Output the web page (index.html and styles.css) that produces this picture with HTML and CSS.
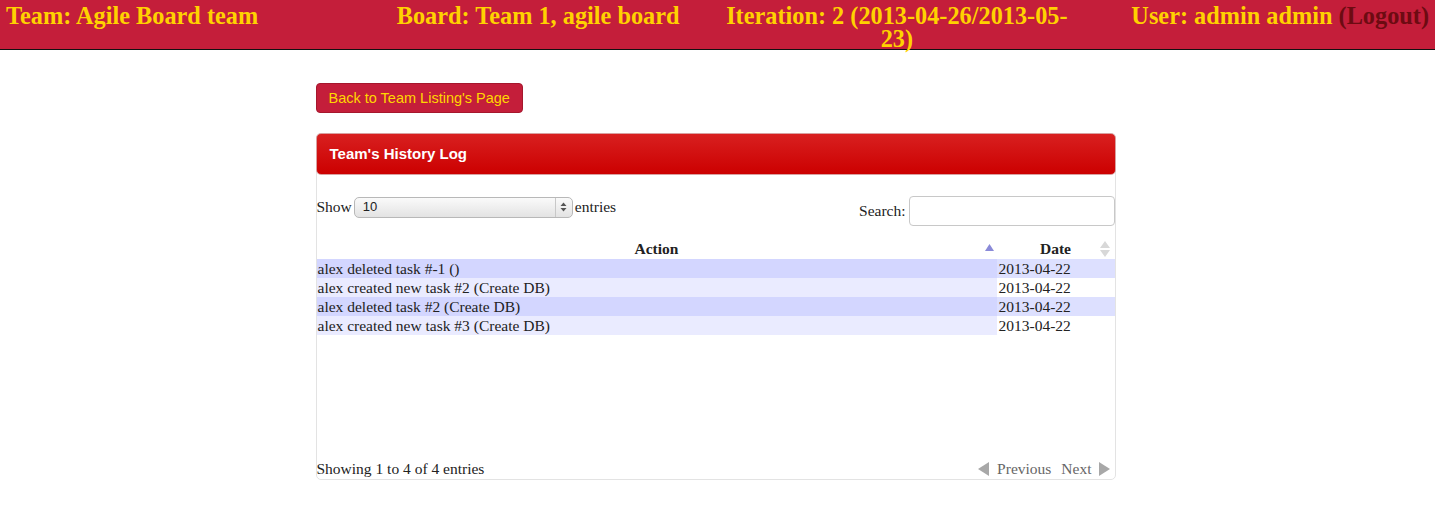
FILE: index.html
```html
<!DOCTYPE html>
<html>
<head>
<meta charset="utf-8">
<link rel="stylesheet" href="styles.css">
</head>
<body>
<div class="topbar">
  <div class="tb-cell tb-left">Team: Agile Board team</div>
  <div class="tb-cell tb-center">Board: Team 1, agile board</div>
  <div class="tb-cell tb-center">Iteration: 2 (2013-04-26/2013-05-23)</div>
  <div class="tb-cell tb-right">User: admin admin <span class="logout">(Logout)</span></div>
</div>
<div class="main">
  <div class="btn">Back to Team Listing's Page</div>
  <div class="panel">
    <div class="panel-head">Team's History Log</div>
    <div class="panel-body">
      <div class="controls">
        <div class="length">Show <span class="select"><span class="sel-val">10</span><span class="sel-arrows"><svg width="7" height="10" viewBox="0 0 7 10"><path d="M3.5 0.5 L6.5 4 L0.5 4 Z M0.5 6 L6.5 6 L3.5 9.5 Z" fill="#555"/></svg></span></span> entries</div>
        <div class="search">Search: <span class="search-input"></span></div>
      </div>
      <div class="table-wrap">
        <table class="grid">
          <thead>
            <tr><th class="col-action">Action<svg class="sort-asc" width="9" height="7" viewBox="0 0 9 7"><path d="M4.5 0 L9 7 L0 7 Z" fill="#8a8ad8"/></svg></th><th class="col-date">Date<svg class="sort-both" width="10" height="16" viewBox="0 0 10 16"><path d="M5 0 L10 7 L0 7 Z M0 9 L10 9 L5 16 Z" fill="#d8d8d8"/></svg></th></tr>
          </thead>
          <tbody>
            <tr class="odd"><td class="a">alex deleted task #-1 ()</td><td class="d">2013-04-22</td></tr>
            <tr class="even"><td class="a">alex created new task #2 (Create DB)</td><td class="d">2013-04-22</td></tr>
            <tr class="odd"><td class="a">alex deleted task #2 (Create DB)</td><td class="d">2013-04-22</td></tr>
            <tr class="even"><td class="a">alex created new task #3 (Create DB)</td><td class="d">2013-04-22</td></tr>
          </tbody>
        </table>
      </div>
      <div class="footer">
        <div class="info">Showing 1 to 4 of 4 entries</div>
        <div class="paging"><svg width="12" height="14" viewBox="0 0 12 14"><path d="M11 0 L11 14 L0 7 Z" fill="#a8a8a8"/></svg><span class="pg prev">Previous</span><span class="pg next">Next</span><svg width="12" height="14" viewBox="0 0 12 14"><path d="M1 0 L1 14 L12 7 Z" fill="#a8a8a8"/></svg></div>
      </div>
    </div>
  </div>
</div>
</body>
</html>
```
FILE: styles.css
```css
html, body { margin: 0; padding: 0; background: #fff; }
body { font-family: "Liberation Serif", "Times New Roman", serif; color: #222; }

.topbar {
  display: grid;
  grid-template-columns: repeat(4, 1fr);
  background: #c41e3a;
  border-bottom: 1px solid #111;
  height: 49px;
  box-sizing: content-box;
}
.tb-cell {
  font-family: "Liberation Serif", "Times New Roman", serif;
  font-weight: bold;
  font-size: 24.3px;
  line-height: 23px;
  color: #ffd200;
  padding: 4px 6px 0 6px;
}
.tb-left { text-align: left; }
.tb-center { text-align: center; padding-left: 5px; padding-right: 5px; }
.tb-right { text-align: right; }
.logout { color: #6d0b12; }

.main {
  width: 800px;
  margin: 0 auto;
  padding-top: 33px;
  box-sizing: border-box;
  position: relative;
  left: -2px;
}
.btn {
  display: inline-block;
  background: #c41e3a;
  color: #ffd700;
  font-family: "Liberation Sans", Arial, sans-serif;
  font-size: 14.5px;
  line-height: 28px;
  height: 28px;
  padding: 0 12px;
  border: 1px solid #a5172d;
  border-radius: 4px;
}
.panel {
  margin-top: 20px;
  border: 1px solid #e3e3e3;
  border-radius: 5px;
  height: 347px;
  box-sizing: border-box;
  display: flex;
  flex-direction: column;
}
.panel-head {
  margin: -1px -1px 0 -1px;
  height: 42px;
  box-sizing: border-box;
  background: linear-gradient(#d82020, #cc0000);
  border: 1px solid #d9a0a0;
  border-radius: 5px;
  color: #fff;
  font-family: "Liberation Sans", Arial, sans-serif;
  font-weight: bold;
  font-size: 15px;
  line-height: 40px;
  padding-left: 13px;
}
.panel-body {
  flex: 1;
  display: flex;
  flex-direction: column;
  font-size: 15.5px;
}
.controls {
  display: flex;
  justify-content: space-between;
  align-items: flex-start;
  padding-top: 20px;
}
.length { display: flex; align-items: center; gap: 2px; height: 24px; }
.select {
  display: inline-flex;
  width: 217px;
  height: 19px;
  border: 1px solid #b8b8b8;
  border-radius: 5px;
  background: linear-gradient(#fafafa, #e3e3e3);
  box-sizing: content-box;
  font-family: "Liberation Sans", Arial, sans-serif;
  font-size: 13px;
  line-height: 17px;
  color: #222;
}
.sel-val { flex: 1; padding-left: 8px; }
.sel-arrows {
  width: 16px;
  border-left: 1px solid #c8c8c8;
  display: flex;
  align-items: center;
  justify-content: center;
}
.search { display: flex; align-items: center; gap: 3px; margin-top: 1px; }
.search-input {
  display: inline-block;
  width: 204px;
  height: 28px;
  border: 1px solid #c8c8c8;
  border-radius: 4px;
  background: #fff;
}
.table-wrap { margin-top: 13px; flex: 1; }
.grid { width: 100%; border-collapse: collapse; font-size: 15.5px; }
.grid th {
  font-weight: bold;
  height: 20px;
  padding: 0;
  position: relative;
  line-height: 20px;
}
.col-action { width: 680px; text-align: center; }
.col-date { text-align: center; }
.sort-asc { position: absolute; right: 3px; top: 5px; }
.sort-both { position: absolute; right: 5px; top: 2px; }
.grid td { padding: 0 1px; height: 19px; line-height: 19px; }
.grid td.d { padding-left: 2px; }
.odd .a { background: #d3d6ff; }
.odd .d { background: #dde0ff; }
.even .a { background: #eaebff; }
.even .d { background: #ffffff; }

.footer {
  display: flex;
  justify-content: space-between;
  align-items: center;
  height: 20px;
}
.paging { display: flex; align-items: center; color: #666; padding-right: 5px; }
.prev { margin-left: 7px; margin-right: 10px; }
.next { margin-right: 6px; }
```
